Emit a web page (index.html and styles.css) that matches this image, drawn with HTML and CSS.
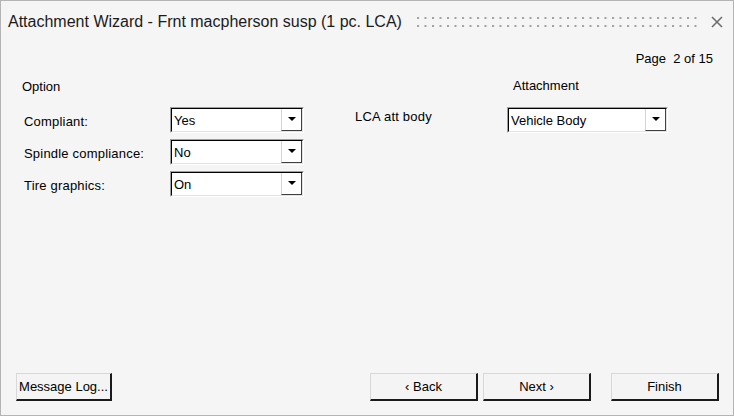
FILE: index.html
```html
<!DOCTYPE html>
<html lang="en">
<head>
    <meta charset="UTF-8">
    <meta name="viewport" content="width=device-width, initial-scale=1.0">
    <title>Attachment Wizard</title>
    <link rel="stylesheet" href="styles.css">
</head>
<body>
    <div class="window">
        <div class="titlebar">
            <span class="title">Attachment Wizard - Frnt macpherson susp (1 pc. LCA)</span>
            <svg class="grip" height="12">
                <defs>
                    <pattern id="dots" width="7.5" height="8" patternUnits="userSpaceOnUse">
                        <rect x="0" y="0" width="2" height="2" fill="#a0a0a0"></rect>
                    </pattern>
                </defs>
                <rect x="0" y="0" width="100%" height="10" fill="url(#dots)"></rect>
            </svg>
            <svg class="close" width="12" height="12" viewBox="0 0 12 12">
                <path d="M1 1 L11 11 M11 1 L1 11" stroke="#6b6b6b" stroke-width="1.5"></path>
            </svg>
        </div>

        <div class="page-info">Page&nbsp; 2 of 15</div>

        <div class="form">
            <div class="section">
                <div class="heading">Option</div>
                <div class="rows">
                    <label>Compliant:</label>
                    <div class="combo"><div class="combo-inner"><span class="value">Yes</span><span class="arrow"></span></div></div>
                    <label>Spindle compliance:</label>
                    <div class="combo"><div class="combo-inner"><span class="value">No</span><span class="arrow"></span></div></div>
                    <label>Tire graphics:</label>
                    <div class="combo"><div class="combo-inner"><span class="value">On</span><span class="arrow"></span></div></div>
                </div>
            </div>
            <div class="section right">
                <div class="heading">Attachment</div>
                <div class="rows">
                    <label>LCA att body</label>
                    <div class="combo"><div class="combo-inner"><span class="value">Vehicle Body</span><span class="arrow"></span></div></div>
                </div>
            </div>
        </div>

        <div class="footer">
            <button class="btn log">Message Log...</button>
            <div class="nav">
                <button class="btn">&lsaquo; Back</button>
                <button class="btn">Next &rsaquo;</button>
                <button class="btn finish">Finish</button>
            </div>
        </div>
    </div>
</body>
</html>
```

FILE: styles.css
```css
body {
    margin: 0;
    padding: 0;
    font-family: "Liberation Sans", Arial, sans-serif;
    color: #000;
}
.window {
    width: 734px;
    height: 416px;
    box-sizing: border-box;
    border: 1px solid #b4b4b4;
    background: #f5f5f5;
    display: flex;
    flex-direction: column;
}
.titlebar {
    display: flex;
    align-items: center;
    height: 42px;
    padding: 0 11px 0 7px;
}
.title {
    font-size: 16px;
    color: #1b1b1b;
    white-space: nowrap;
}
.grip {
    flex: 1;
    margin: 0 13px 0 15px;
    position: relative;
    top: 1px;
}
.close {
    flex: none;
    position: relative;
    left: 1px;
}
.page-info {
    text-align: right;
    font-size: 13px;
    padding-right: 20px;
    margin-top: 8px;
    height: 16px;
}
.form {
    display: flex;
    margin-top: 12px;
}
.section {
    display: flex;
    flex-direction: column;
}
.heading {
    font-size: 13px;
    padding-left: 21px;
    height: 16px;
}
.right {
    margin-left: 20px;
}
.right .heading {
    padding-left: 189px;
    position: relative;
    top: -1px;
}
.rows {
    display: grid;
    grid-template-columns: 146px 134px;
    row-gap: 6px;
    margin-top: 12px;
    padding-left: 23px;
    align-items: center;
}
.right .rows {
    grid-template-columns: 152px 161px;
    padding-left: 31px;
}
.rows label {
    font-size: 13px;
    letter-spacing: 0.2px;
    position: relative;
    top: 1px;
}
.right .rows label {
    top: -4px;
}
.combo {
    height: 26px;
    box-sizing: border-box;
    border-top: 1px solid #a0a0a0;
    border-left: 1px solid #a0a0a0;
    border-right: 1px solid #fff;
    border-bottom: 1px solid #fff;
    background: #fff;
    display: flex;
}
.combo-inner {
    flex: 1;
    display: flex;
    align-items: stretch;
    border-top: 1px solid #000;
    border-left: 1px solid #000;
    border-right: 1px solid #e3e3e3;
    border-bottom: 1px solid #e3e3e3;
}
.value {
    flex: 1;
    font-size: 13px;
    padding-left: 2px;
    display: flex;
    align-items: center;
}
.arrow {
    width: 21px;
    box-sizing: border-box;
    border-left: 1px solid #d4d4d4;
    border-right: 1px solid #404040;
    border-bottom: 1px solid #404040;
    background: #fff;
    display: flex;
    align-items: center;
    justify-content: center;
}
.arrow::after {
    content: "";
    border-left: 4px solid transparent;
    border-right: 4px solid transparent;
    border-top: 4px solid #000;
    margin-top: -2px;
}
.footer {
    margin-top: auto;
    display: flex;
    justify-content: space-between;
    padding: 0 14px 14px 15px;
}
.nav {
    display: flex;
}
.btn {
    height: 28px;
    width: 108px;
    box-sizing: border-box;
    font-family: "Liberation Sans", Arial, sans-serif;
    font-size: 13px;
    color: #000;
    background: #f4f4f4;
    border-top: 1px solid #d8d8d8;
    border-left: 1px solid #d8d8d8;
    border-right: 2px solid #1a1a1a;
    border-bottom: 2px solid #1a1a1a;
    padding: 0;
    margin-left: 5px;
}
.btn.log {
    width: 96px;
    margin-left: 0;
}
.btn.finish {
    margin-left: 20px;
}
```
